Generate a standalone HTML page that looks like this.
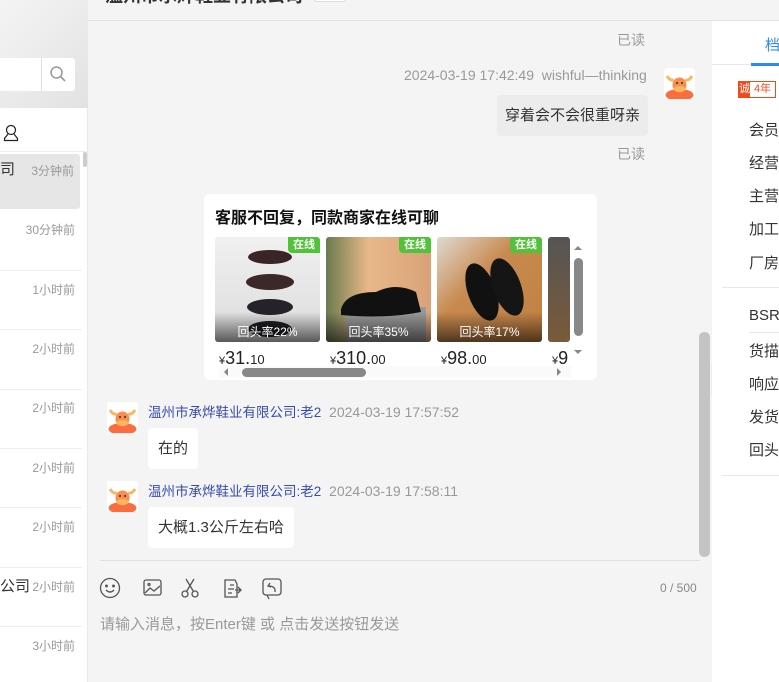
<!DOCTYPE html>
<html><head><meta charset="utf-8"><style>
*{margin:0;padding:0;box-sizing:border-box}
body{width:779px;height:682px;overflow:hidden;position:relative;background:#f4f4f4;font-family:"Liberation Sans","Noto Sans CJK SC",sans-serif;font-size:14px;color:#333}
.abs{position:absolute}
.left{left:0;top:0;width:88px;height:682px;background:#fff;border-right:1px solid #e8e8e8}
.lt{left:0;top:0;width:88px;height:108px;background:linear-gradient(135deg,#f4f4f4,#e2e2e2)}
.time{font-size:12px;color:#999;right:12px;position:absolute}
.sep{position:absolute;left:0;width:82px;height:1px;background:#eee}
.av{width:31px;height:31px;border-radius:4px;background:#fff;overflow:hidden}
.bub{background:#fff;border-radius:4px;padding:0 10px;line-height:41px;font-size:15px;color:#333}
.name{font-size:13.5px;color:#3a4bb0}
.ts{font-size:14px;color:#999}
.right{left:712px;top:21px;width:67px;height:661px;background:#fff}
.ri{position:absolute;left:37px;font-size:15px;color:#333}
.card{left:204px;top:194px;width:393px;height:186px;background:#fff;border-radius:6px}
.prod{position:absolute;top:43px;width:105px;height:105px;border-radius:3px;overflow:hidden}
.tag{position:absolute;right:0;top:0;background:#52c23a;color:#fff;font-size:11px;font-weight:bold;padding:0 5px;line-height:16px;border-radius:0 3px 0 4px}
.rt{position:absolute;bottom:0;left:0;right:0;height:30px;background:linear-gradient(transparent,rgba(0,0,0,.6));color:#fff;font-size:12px;text-align:center;line-height:40px}
.pr{position:absolute;top:154px;font-size:18px;color:#222}
.pr small{font-size:13px}.pr i{font-style:normal;font-size:11px}
</style></head><body>
<div class="abs" style="left:0;top:0;width:779px;height:21px;background:#f4f4f4;border-bottom:1px solid #e4e4e4"></div>
<div class="abs" style="left:105px;top:-18px;font-size:18px;font-weight:bold;color:#333">温州市承烨鞋业有限公司</div>
<div class="abs" style="left:313px;top:-6px;width:34px;height:8px;border:1px solid #ddd;border-radius:4px;background:#fff"></div>

<div class="abs left">
 <div class="abs lt"></div>
 <div class="abs" style="left:0;top:58px;width:75px;height:33px;background:#fff;border-radius:0 3px 3px 0"></div>
 <div class="abs" style="left:41px;top:58px;width:1px;height:33px;background:#e0e0e0"></div>
 <svg class="abs" style="left:49px;top:65px" width="18" height="18" viewBox="0 0 18 18"><circle cx="7.5" cy="7.5" r="5.5" fill="none" stroke="#999" stroke-width="1.5"/><path d="M11.5 11.5L16 16" stroke="#999" stroke-width="1.6"/></svg>
 <svg class="abs" style="left:3px;top:124px" width="16" height="18" viewBox="0 0 16 18"><circle cx="8" cy="6" r="4.5" fill="none" stroke="#222" stroke-width="1.2"/><path d="M5 10L1.5 14.5V16.5H14.5V14.5L11 10" fill="none" stroke="#222" stroke-width="1.2"/></svg>
 <div class="sep" style="top:151px;width:88px"></div>
 <div class="abs" style="left:0;top:154px;width:80px;height:55px;background:#e6e6e6;border-radius:0 3px 3px 0"></div>
 <div class="abs" style="left:83px;top:152px;width:4px;height:15px;background:#ccc;border-radius:2px"></div>
 <div class="abs" style="left:0;top:158px;font-size:15px;color:#333">司</div>
 <div class="time" style="top:162px;right:13px">3分钟前</div>
 <div class="time" style="top:221px">30分钟前</div>
 <div class="sep" style="top:270px"></div>
 <div class="time" style="top:281px">1小时前</div>
 <div class="sep" style="top:329px"></div>
 <div class="time" style="top:340px">2小时前</div>
 <div class="sep" style="top:389px"></div>
 <div class="time" style="top:399px">2小时前</div>
 <div class="sep" style="top:448px"></div>
 <div class="time" style="top:459px">2小时前</div>
 <div class="sep" style="top:507px"></div>
 <div class="time" style="top:518px">2小时前</div>
 <div class="sep" style="top:567px"></div>
 <div class="abs" style="left:0;top:575px;font-size:15px;color:#333">公司</div>
 <div class="time" style="top:578px">2小时前</div>
 <div class="sep" style="top:626px"></div>
 <div class="time" style="top:637px">3小时前</div>
</div>

<div class="abs" style="left:617px;top:30px;font-size:14px;color:#999">已读</div>
<div class="abs" style="left:404px;top:67px;font-size:14px;color:#999">2024-03-19 17:42:49&nbsp; wishful—thinking</div>
<svg class="abs av" style="left:664px;top:68px" width="31" height="31" viewBox="0 0 31 31"><rect width="31" height="31" fill="#fff"/><ellipse cx="15.5" cy="27" rx="14" ry="6" fill="#fb6d3f"/><path d="M3 8Q6 13 10 12M28 8Q25 13 21 12" stroke="#fcb660" stroke-width="3" fill="none"/><ellipse cx="15.5" cy="17" rx="7" ry="7.5" fill="#fb8d4f"/><ellipse cx="15.5" cy="21" rx="6" ry="3" fill="#fcb660"/><circle cx="13" cy="15" r="1" fill="#333"/><circle cx="18" cy="15" r="1" fill="#333"/></svg>
<div class="abs bub" style="left:497px;top:95px;background:#ececec;padding:0 8px">穿着会不会很重呀亲</div>
<div class="abs" style="left:617px;top:144px;font-size:14px;color:#999">已读</div>

<div class="abs card">
 <div class="abs" style="left:11px;top:10px;font-size:16px;font-weight:bold;color:#111">客服不回复，同款商家在线可聊</div>
 <div class="prod" style="left:11px;background:linear-gradient(#f0f0f0,#dcdcdc)"><svg width="105" height="105"><ellipse cx="55" cy="20" rx="22" ry="7" fill="#3a2526"/><ellipse cx="55" cy="45" rx="24" ry="8" fill="#3c2828"/><ellipse cx="55" cy="70" rx="23" ry="8" fill="#262229"/><ellipse cx="55" cy="92" rx="22" ry="8" fill="#1e1e22"/></svg><div class="tag">在线</div><div class="rt">回头率22%</div></div>
 <div class="prod" style="left:122px;background:linear-gradient(90deg,#6a7a50 0%,#e8b888 40%,#d9a278 100%)"><svg width="105" height="105"><rect x="20" y="70" width="80" height="35" fill="#999"/><path d="M15 72Q20 55 50 55Q70 45 90 55L95 75Q60 82 15 78Z" fill="#111"/></svg><div class="tag">在线</div><div class="rt">回头率35%</div></div>
 <div class="prod" style="left:233px;background:linear-gradient(135deg,#e0dad2 0%,#c88a50 40%,#c08040 100%)"><svg width="105" height="105"><ellipse cx="45" cy="55" rx="14" ry="30" fill="#111" transform="rotate(-20 45 55)"/><ellipse cx="70" cy="50" rx="14" ry="30" fill="#151515" transform="rotate(-20 70 50)"/></svg><div class="tag">在线</div><div class="rt">回头率17%</div></div>
 <div class="prod" style="left:344px;width:22px;background:linear-gradient(#555,#7a5a3a)"></div>
 <div class="pr" style="left:15px"><i>¥</i>31.<small>10</small></div>
 <div class="pr" style="left:126px"><i>¥</i>310.<small>00</small></div>
 <div class="pr" style="left:237px"><i>¥</i>98.<small>00</small></div>
 <div class="pr" style="left:348px"><i>¥</i>9</div>
 <div class="abs" style="left:366px;top:43px;width:20px;height:128px;background:#fff"></div>
 <div class="abs" style="left:370px;top:64px;width:9px;height:78px;background:#888;border-radius:5px"></div>
 <div class="abs" style="left:370px;top:52px;width:0;height:0;border:4px solid transparent;border-bottom-color:#888;border-top:0"></div>
 <div class="abs" style="left:370px;top:156px;width:0;height:0;border:4px solid transparent;border-top-color:#888;border-bottom:0"></div>
 <div class="abs" style="left:15px;top:172px;width:352px;height:12px;background:#fafafa"></div>
 <div class="abs" style="left:38px;top:174px;width:124px;height:9px;background:#888;border-radius:5px"></div>
 <div class="abs" style="left:20px;top:174px;width:0;height:0;border:4px solid transparent;border-right-color:#888;border-left:0"></div>
 <div class="abs" style="left:353px;top:174px;width:0;height:0;border:4px solid transparent;border-left-color:#888;border-right:0"></div>
</div>

<svg class="abs" style="left:107px;top:402px" width="31" height="31" viewBox="0 0 31 31"><rect width="31" height="31" fill="#fff"/><ellipse cx="15.5" cy="27" rx="14" ry="6" fill="#fb6d3f"/><path d="M3 8Q6 13 10 12M28 8Q25 13 21 12" stroke="#fcb660" stroke-width="3" fill="none"/><ellipse cx="15.5" cy="17" rx="7" ry="7.5" fill="#fb8d4f"/><ellipse cx="15.5" cy="21" rx="6" ry="3" fill="#fcb660"/><circle cx="13" cy="15" r="1" fill="#333"/><circle cx="18" cy="15" r="1" fill="#333"/></svg>
<div class="abs" style="left:148px;top:401px;white-space:nowrap"><span class="name">温州市承烨鞋业有限公司:老2</span>&nbsp; <span class="ts">2024-03-19 17:57:52</span></div>
<div class="abs bub" style="left:148px;top:428px">在的</div>
<svg class="abs" style="left:107px;top:481px" width="31" height="31" viewBox="0 0 31 31"><rect width="31" height="31" fill="#fff"/><ellipse cx="15.5" cy="27" rx="14" ry="6" fill="#fb6d3f"/><path d="M3 8Q6 13 10 12M28 8Q25 13 21 12" stroke="#fcb660" stroke-width="3" fill="none"/><ellipse cx="15.5" cy="17" rx="7" ry="7.5" fill="#fb8d4f"/><ellipse cx="15.5" cy="21" rx="6" ry="3" fill="#fcb660"/><circle cx="13" cy="15" r="1" fill="#333"/><circle cx="18" cy="15" r="1" fill="#333"/></svg>
<div class="abs" style="left:148px;top:480px;white-space:nowrap"><span class="name">温州市承烨鞋业有限公司:老2</span>&nbsp; <span class="ts">2024-03-19 17:58:11</span></div>
<div class="abs bub" style="left:148px;top:507px">大概1.3公斤左右哈</div>

<div class="abs" style="left:699px;top:332px;width:11px;height:225px;background:#c4c4c4;border-radius:5px"></div>
<div class="abs" style="left:100px;top:560px;width:600px;height:1px;background:#e0e0e0"></div>
<svg class="abs" style="left:99px;top:576px" width="190" height="24" viewBox="0 0 190 24" fill="none" stroke="#555" stroke-width="1.3">
<circle cx="11" cy="12" r="9.5"/><circle cx="7.5" cy="10" r=".8" fill="#555"/><circle cx="14.5" cy="10" r=".8" fill="#555"/><path d="M7 14Q11 18 15 14"/>
<rect x="45" y="4" width="17" height="15" rx="2"/><path d="M46 17L51 12L55 15L61 10"/><circle cx="50" cy="8.5" r="1"/>
<circle cx="86" cy="18" r="3"/><circle cx="96" cy="18" r="3"/><path d="M87.5 15.5L95 3M94.5 15.5L87 3"/>
<path d="M136 4H126V21H138V8Z M131 9h4M129 13h6M129 17h4M136 14l6 0M139 11l3 3-3 3"/>
<rect x="164" y="3" width="18" height="16" rx="3"/><path d="M168 19L170 23M171 7L169 10L172 11M169 10Q177 10 176 16"/>
</svg>
<div class="abs" style="left:660px;top:581px;font-size:12px;color:#888">0 / 500</div>
<div class="abs" style="left:100px;top:613px;font-size:15px;color:#999">请输入消息，按Enter键 或 点击发送按钮发送</div>

<div class="abs" style="left:711px;top:363px;width:14px;height:33px;background:#ececec;border-radius:3px 0 0 3px;font-size:12px;color:#777;line-height:33px;text-align:center">»</div>
<div class="abs right">
 <div class="abs" style="left:0;top:43px;width:67px;height:1px;background:#e8e8e8"></div>
 <div class="abs" style="left:53px;top:13px;font-size:15px;color:#2a8cef">档</div>
 <div class="abs" style="left:39px;top:42px;width:28px;height:3px;background:#2a8cef"></div>
 <div class="abs" style="left:26px;top:60px;height:17px;display:flex;font-size:11px;line-height:15px;white-space:nowrap"><span style="background:#f04a1a;color:#fff;width:12px;text-align:center;border:1px solid #f04a1a">诚</span><span style="color:#f04a1a;border:1px solid #f04a1a;border-left:0;width:26px;text-align:center">4年</span></div>
 <div class="ri" style="top:98px">会员</div>
 <div class="ri" style="top:131px">经营</div>
 <div class="ri" style="top:164px">主营</div>
 <div class="ri" style="top:197px">加工</div>
 <div class="ri" style="top:231px">厂房</div>
 <div class="abs" style="left:10px;top:266px;width:57px;height:1px;background:#e8e8e8"></div>
 <div class="ri" style="top:286px">BSR</div>
 <div class="abs" style="left:37px;top:311px;width:30px;height:1px;background:#e8e8e8"></div>
 <div class="ri" style="top:319px">货描</div>
 <div class="ri" style="top:352px">响应</div>
 <div class="ri" style="top:385px">发货</div>
 <div class="ri" style="top:418px">回头</div>
 <div class="abs" style="left:10px;top:454px;width:57px;height:1px;background:#e8e8e8"></div>
</div>
</body></html>
